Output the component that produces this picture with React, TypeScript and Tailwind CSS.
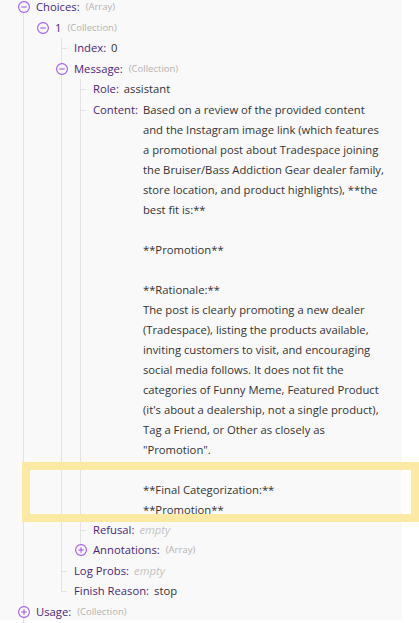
import React from "react";

type TreeNode = {
  label: string;
  colon?: boolean;
  value?: string;
  lines?: string[];
  empty?: boolean;
  hint?: string;
  open?: boolean;
  collapsed?: boolean;
  children?: TreeNode[];
};

const contentLines = [
  "Based on a review of the provided content",
  "and the Instagram image link (which features",
  "a promotional post about Tradespace joining",
  "the Bruiser/Bass Addiction Gear dealer family,",
  "store location, and product highlights), **the",
  "best fit is:**",
  "",
  "**Promotion**",
  "",
  "**Rationale:**",
  "The post is clearly promoting a new dealer",
  "(Tradespace), listing the products available,",
  "inviting customers to visit, and encouraging",
  "social media follows. It does not fit the",
  "categories of Funny Meme, Featured Product",
  "(it's about a dealership, not a single product),",
  "Tag a Friend, or Other as closely as",
  "\"Promotion\".",
  "",
  "**Final Categorization:**",
  "**Promotion**",
];

const tree: TreeNode[] = [
  {
    label: "Choices",
    hint: "(Array)",
    open: true,
    children: [
      {
        label: "1",
        colon: false,
        hint: "(Collection)",
        open: true,
        children: [
          { label: "Index", value: "0" },
          {
            label: "Message",
            hint: "(Collection)",
            open: true,
            children: [
              { label: "Role", value: "assistant" },
              { label: "Content", lines: contentLines },
              { label: "Refusal", empty: true },
              { label: "Annotations", hint: "(Array)", collapsed: true },
            ],
          },
          { label: "Log Probs", empty: true },
          { label: "Finish Reason", value: "stop" },
        ],
      },
    ],
  },
  { label: "Usage", hint: "(Collection)", collapsed: true },
];

function Toggle({ minus }: { minus: boolean }) {
  return (
    <svg
      width="12"
      height="12"
      viewBox="0 0 12 12"
      className="absolute left-0 top-[4.25px]"
    >
      <circle cx="6" cy="6" r="5.4" fill="#f9f9f9" stroke="#a35ae8" strokeWidth="1.1" />
      <line x1="3.3" y1="6" x2="8.7" y2="6" stroke="#a35ae8" strokeWidth="1.1" />
      {!minus && <line x1="6" y1="3.3" x2="6" y2="8.7" stroke="#a35ae8" strokeWidth="1.1" />}
    </svg>
  );
}

function Item({
  node,
  line,
}: {
  node: TreeNode;
  line: "full" | "half" | "none" | "fromCenter";
}) {
  const expandable = node.open || node.collapsed;
  return (
    <div className="flex">
      <div className="relative w-[18px] shrink-0">
        {line === "full" && (
          <span className="absolute left-[5px] top-0 bottom-0 w-px bg-[#e3e3e3]" />
        )}
        {line === "half" && (
          <span className="absolute left-[5px] top-0 h-[10px] w-px bg-[#e3e3e3]" />
        )}
        {line === "fromCenter" && (
          <span className="absolute left-[5px] top-[10px] bottom-0 w-px bg-[#e3e3e3]" />
        )}
        {expandable ? (
          <Toggle minus={!!node.open} />
        ) : (
          <span className="absolute left-[5px] top-[10px] h-px w-[6px] bg-[#e3e3e3]" />
        )}
      </div>
      <div className="flex min-w-0 flex-col">
        <div className="flex items-start">
          <span
            className={`whitespace-nowrap text-[#4a2678] ${
              node.lines ? "leading-[20px]" : "leading-[20.5px]"
            }`}
          >
            {node.label}
            {node.colon === false ? "" : ":"}
          </span>
          {node.hint && (
            <span className="ml-[6px] whitespace-nowrap text-[9.5px] leading-[20.5px] text-[#b3b3b3]">
              {node.hint}
            </span>
          )}
          {node.value && (
            <span className="ml-[5px] whitespace-nowrap leading-[20.5px] text-[#333333]">
              {node.value}
            </span>
          )}
          {node.empty && (
            <span className="ml-[5px] whitespace-nowrap italic leading-[20.5px] text-[#c2c2c2]">
              empty
            </span>
          )}
          {node.lines && (
            <div className="ml-[5px] flex flex-col text-[#333333]">
              {node.lines.map((l, i) => (
                <div key={i} className="h-5 whitespace-nowrap leading-[20px]">
                  {l}
                </div>
              ))}
            </div>
          )}
        </div>
        {node.open && node.children && (
          <div className="ml-px flex flex-col">
            {node.children.map((c, i) => {
              const last = i === node.children!.length - 1;
              const only = node.children!.length === 1;
              return (
                <Item
                  key={i}
                  node={c}
                  line={only ? "none" : last ? "half" : "full"}
                />
              );
            })}
          </div>
        )}
      </div>
    </div>
  );
}

export default function App() {
  return (
    <div className="relative h-[623px] w-[419px] overflow-hidden bg-white font-['Open_Sans','Noto_Sans',sans-serif] text-[11.25px]">
      <div className="h-full w-[402px] bg-[#f9f9f9]">
        <div className="mt-[-3px] flex flex-col pl-[18px]">
          {tree.map((n, i) => (
            <Item key={i} node={n} line={i === 0 ? "fromCenter" : "full"} />
          ))}
          <div className="relative h-5">
            <span className="absolute left-[5px] top-0 bottom-0 w-px bg-[#e3e3e3]" />
          </div>
        </div>
      </div>
      <div className="pointer-events-none absolute left-[22px] top-[462px] h-[60px] w-[397px] border-[8px] border-[#fce9a3]" />
    </div>
  );
}
